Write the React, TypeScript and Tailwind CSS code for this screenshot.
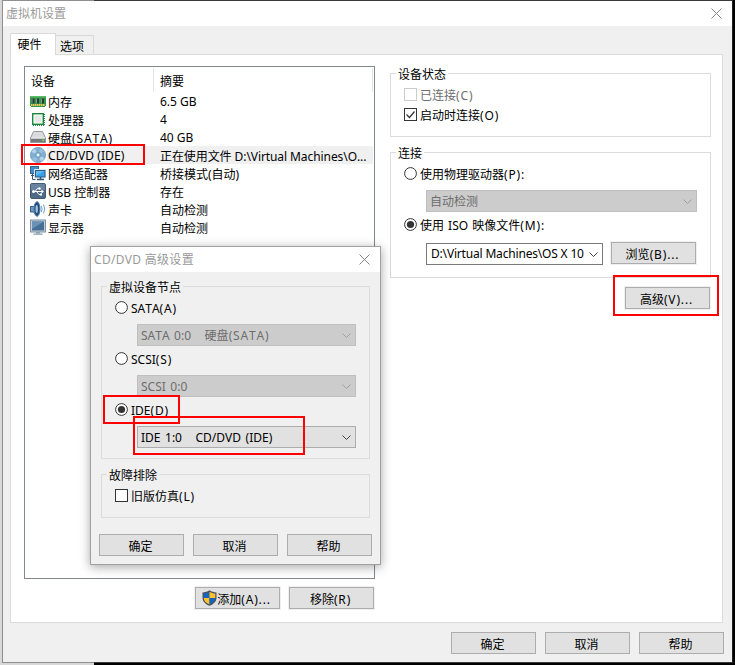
import React from "react";

// --- DATA CONFIGURATION ---
const DEVICES = [
  { icon: "memory", name: "内存", summary: "6.5 GB" },
  { icon: "cpu", name: "处理器", summary: "4" },
  { icon: "disk", name: "硬盘(SATA)", summary: "40 GB" },
  {
    icon: "cd",
    name: "CD/DVD (IDE)",
    summary: "正在使用文件 D:\\Virtual Machines\\O...",
    selected: true,
  },
  { icon: "network", name: "网络适配器", summary: "桥接模式(自动)" },
  { icon: "usb", name: "USB 控制器", summary: "存在" },
  { icon: "sound", name: "声卡", summary: "自动检测" },
  { icon: "display", name: "显示器", summary: "自动检测" },
];

const DeviceIcon = ({ icon }: { icon: string }) => {
  const props = { width: 16, height: 16, viewBox: "0 0 16 16", className: "shrink-0" };
  switch (icon) {
    case "memory":
      return (
        <svg {...props}>
          <path d="M0 3h16v10h-1v1H1v-1H0z" fill="#2f9a45" />
          <path d="M0 3h16v1.500H0z" fill="#5cbb66" />
          <path d="M1.500 5.500h3v5h-3zM6 5.500h3v5H6zM11 5.500h3v5h-3z" fill="#2b3b38" />
          <path d="M1.500 5.500h1v5h-1zM6 5.500h1v5H6zM11 5.500h1v5h-1z" fill="#82968c" />
          <path d="M1 12h14" stroke="#efc75c" strokeWidth="2" strokeDasharray="1.500 .5" />
        </svg>
      );
    case "cpu":
      return (
        <svg {...props}>
          <rect x="2.500" y="2.500" width="11" height="11" fill="#3da556" stroke="#1f8240" />
          <path d="M2.500 3v11M14.500 3v11M3 14.500h11" stroke="#2a8c48" strokeDasharray="1 1" />
          <rect x="4" y="4" width="8" height="8" fill="#e6e8e7" stroke="#f7fbf8" />
        </svg>
      );
    case "disk":
      return (
        <svg {...props}>
          <path d="M3.500 2.500h9L15.500 9v4.500H.5V9z" fill="#c9ced3" stroke="#969a9e" />
          <path d="M4 3h8l2.500 6h-13z" fill="#d9dbdd" />
          <path d="M1 9.500h14V13H1z" fill="#74797e" />
          <path d="M1 9h14" stroke="#f1f2f3" />
          <rect x="12" y="10.500" width="2" height="1.500" fill="#67e047" />
        </svg>
      );
    case "cd":
      return (
        <svg {...props}>
          <circle cx="8" cy="8" r="7.600" fill="#84aed0" stroke="#6c99bf" strokeWidth=".8" />
          <path d="M8 8 1.500 5A7 7 0 0 1 5 1.700zM8 8l6.500 3a7 7 0 0 1-3.500 3.300z" fill="#b7d3e8" />
          <path d="M8 8 10 1.300a7 7 0 0 1 4 3.200zM8 8l-2 6.700a7 7 0 0 1-4-3.200z" fill="#98bfdc" />
          <circle cx="8" cy="8" r="2.800" fill="#8fb9da" stroke="#6e9fc8" />
          <circle cx="8" cy="8" r="1.200" fill="#f4f9fc" />
        </svg>
      );
    case "network":
      return (
        <svg {...props}>
          <rect x=".5" y="1.500" width="8" height="7" fill="#3f8cc9" stroke="#3c648b" />
          <path d="M1 10.500h4M2.500 9v5.500h3" stroke="#3c5873" fill="none" />
          <rect x="4.500" y="4.500" width="11" height="8.500" fill="#fff" stroke="#e0e8ee" />
          <rect x="5.500" y="5.500" width="9.500" height="6.500" fill="#38a0ea" stroke="#2c5b88" />
          <path d="M6 6h8.500L6 10.500z" fill="#64bbf4" />
          <path d="M7 14.500h7M10.500 12v2" stroke="#345675" strokeWidth="1.500" />
        </svg>
      );
    case "usb":
      return (
        <svg {...props}>
          <rect x=".5" y=".5" width="15" height="15" rx="1.500" fill="#4f6a84" stroke="#435c74" />
          <path d="M1 1h14v6H1z" fill="#6882a0" />
          <path d="M3 8.500h9M5 8.500l2.500-3h2M6.500 8.500 9 11.500h2" stroke="#fff" fill="none" />
          <circle cx="3.500" cy="8.500" r="1.500" fill="#fff" />
          <circle cx="9.500" cy="5.500" r="1.200" fill="#fff" />
          <path d="M11.500 6.500 14 8.500l-2.500 2zM10 10.500h2v2h-2z" fill="#fff" />
        </svg>
      );
    case "sound":
      return (
        <svg {...props}>
          <path d="M.5 5.500h3L7.500.8v14.400L3.500 11h-3z" fill="#6d99c0" stroke="#335b86" />
          <ellipse cx="7" cy="8" rx="3" ry="7.200" fill="#254a75" stroke="#4d7fad" />
          <ellipse cx="6.700" cy="8" rx="1.200" ry="4" fill="#9fc6e4" />
          <path d="M11.300 5q1.700 3 0 6M13.500 3.500q2.500 4.500 0 9" stroke="#6aa0cd" fill="none" />
        </svg>
      );
    default:
      return (
        <svg {...props}>
          <rect x=".5" y="1" width="15" height="12" fill="#c3ced7" stroke="#7d93a6" />
          <rect x="2" y="2.500" width="12" height="9" fill="#466f96" />
          <path d="M2 2.500h12L2 10z" fill="#6b92b5" />
          <path d="M6 13h4v1.500H6z" fill="#8c9dac" />
          <path d="M3.500 15.200h9" stroke="#9aabb9" strokeWidth="1.500" />
        </svg>
      );
  }
};

const ShieldIcon = () => (
  <svg width="15" height="16" viewBox="0 0 15 16" className="shrink-0">
    <path d="M7.500.2C5.500 1.600 3 2.300.5 2.400v5.300c0 3.800 2.900 6.400 7 8.100 4.100-1.700 7-4.300 7-8.100V2.400C12 2.300 9.500 1.600 7.500.2z" fill="#4a5058" />
    <path d="M7.500 1.700C5.500 2.900 3.700 3.400 1.700 3.600v4.300h5.800z" fill="#1565c0" />
    <path d="M7.500 1.700c2 1.200 3.800 1.700 5.800 1.900v4.300H7.500z" fill="#ffc12e" />
    <path d="M1.700 7.900h5.800v6.500c-3.200-1.400-5.500-3.400-5.800-6.500z" fill="#ffc12e" />
    <path d="M13.300 7.900H7.500v6.500c3.200-1.400 5.500-3.400 5.800-6.500z" fill="#1565c0" />
  </svg>
);

const CloseIcon = () => (
  <svg width="11" height="11" viewBox="0 0 11 11" className="shrink-0">
    <path d="M.5.5l10 10M10.500.5l-10 10" stroke="#858585" fill="none" />
  </svg>
);

// Access keys such as "(A)..." are set a little wider than the label before them
const Label = ({ text, className = "" }: { text: string; className?: string }) => {
  const match = text.match(/^(.*\S)(\([A-Z]+\)\S*)$/);
  return (
    <span className={`whitespace-pre ${className}`}>
      {match ? match[1] : text}
      {match && <span className="tracking-[0.85px]">{match[2]}</span>}
    </span>
  );
};

// Latin-only cells sit one pixel above the Chinese ones
const cellPadding = (text: string) => (/^[ -~]+$/.test(text) ? "pt-px" : "pt-[3px]");

const Button = ({ label, icon }: { label: string; icon?: React.ReactNode }) => (
  <button className="flex h-[22px] w-[85px] shrink-0 items-center justify-center border border-[#adadad] bg-[#e1e1e1] pr-0.5 whitespace-nowrap ring-1 ring-[#f0f0f0]">
    {icon}
    <Label text={label} className="pt-[3px]" />
  </button>
);

const Radio = ({ label, checked }: { label: string; checked?: boolean }) => (
  <div className="flex h-[14px] items-center gap-[3px]">
    <svg width="13" height="13" viewBox="0 0 13 13" className="mb-px shrink-0">
      <circle cx="6.500" cy="6.500" r="5.900" fill="#fff" stroke="#333" />
      {checked && <circle cx="6.500" cy="6.500" r="3.600" fill="#333" />}
    </svg>
    <Label text={label} className="pt-0.5 [word-spacing:1px]" />
  </div>
);

const Checkbox = ({
  label,
  checked,
  disabled,
}: {
  label: string;
  checked?: boolean;
  disabled?: boolean;
}) => (
  <div className="flex h-[13px] items-center gap-[3px]">
    <svg width="13" height="13" viewBox="0 0 13 13" className="shrink-0">
      <rect x=".5" y=".5" width="12" height="12" fill="#fff" stroke={disabled ? "#ccc" : "#333"} />
      {checked && <path d="M2.500 6.500l3 3 5-6" stroke="#333" strokeWidth="1.200" fill="none" />}
    </svg>
    <Label text={label} className={disabled ? "pt-[3px] text-[#6d6d6d]" : "pt-[3px]"} />
  </div>
);

const Select = ({ value, look }: { value: string; look: "disabled" | "edit" | "list" }) => {
  const colors = {
    disabled: "border-[#bfbfbf] bg-[#cccccc] text-[#6d6d6d]",
    edit: "border-[#7a7a7a] bg-white text-black",
    list: "border-[#adadad] bg-[#e1e1e1] text-black",
  };
  return (
    <div className={`flex h-[22px] items-center justify-between border pr-1 pl-[3px] ${colors[look]}`}>
      <Label
        text={value}
        className={look === "edit" ? "pl-px tracking-[-0.18px]" : "pt-0.5 [word-spacing:1.4px]"}
      />
      <svg width="9" height="5" viewBox="0 0 9 5" className="shrink-0">
        <path d="M.5.5l4 4 4-4" stroke={look === "disabled" ? "#a0a0a0" : "#444"} fill="none" />
      </svg>
    </div>
  );
};

const Marker = ({ className }: { className: string }) => (
  <div className={`pointer-events-none absolute border-2 border-[#f00] ${className}`} />
);

const AdvancedDialog = () => (
  <div className="absolute top-[246px] left-[90px] h-[319px] w-[291px] border border-[#a0a0a0] bg-[#f0f0f0] shadow-[0_2px_10px_rgba(0,0,0,0.35)]">
    <div className="flex h-[25px] items-center justify-between bg-white pr-2.5 pl-[3px] text-[#999]">
      <span className="tracking-[0.3px]">CD/DVD 高级设置</span>
      <CloseIcon />
    </div>
    <div className="mx-2.5 mt-[14px] h-[173px] border border-[#dcdcdc] px-[13px]">
      <div className="-mt-2 -ml-2 h-4 w-fit bg-[#f0f0f0] px-0.5 leading-[18px]">虚拟设备节点</div>
      <div className="mt-1.5">
        <Radio label="SATA(A)" />
      </div>
      <div className="mt-[9px] ml-[22px]">
        <Select value="SATA 0:0   硬盘(SATA)" look="disabled" />
      </div>
      <div className="mt-1.5">
        <Radio label="SCSI(S)" />
      </div>
      <div className="mt-[9px] ml-[22px]">
        <Select value="SCSI 0:0" look="disabled" />
      </div>
      <div className="mt-1.5">
        <Radio label="IDE(D)" checked />
      </div>
      <div className="mt-[9px] ml-[22px]">
        <Select value="IDE 1:0   CD/DVD (IDE)" look="list" />
      </div>
    </div>
    <div className="mx-2.5 mt-[15px] h-11 border border-[#dcdcdc] px-[13px]">
      <div className="-mt-2 -ml-2 h-4 w-fit bg-[#f0f0f0] px-0.5 leading-[18px]">故障排除</div>
      <div className="mt-1.5">
        <Checkbox label="旧版仿真(L)" />
      </div>
    </div>
    <div className="mt-4 flex gap-[9px] pl-2">
      <Button label="确定" />
      <Button label="取消" />
      <Button label="帮助" />
    </div>
  </div>
);

const HardwareList = () => (
  <div className="h-[513px] border border-[#828790] bg-white">
    <div className="flex h-[25px] pt-px">
      <div className="w-[129px] border-r border-[#e5e5e5] pt-0.5 pl-1.5 leading-[24px]">设备</div>
      <div className="mr-px flex-1 border-r border-[#e5e5e5] pt-0.5 pl-1.5 leading-[24px]">摘要</div>
    </div>
    {DEVICES.map((device) => (
      <div
        key={device.name}
        className="flex h-[18px] items-center pl-[5px] leading-[18px] whitespace-nowrap"
      >
        <DeviceIcon icon={device.icon} />
        <div
          className={`ml-px flex h-[18px] w-[107px] items-center pl-px ${device.selected ? "bg-[#f0f0f0] tracking-[0.08px]" : ""}`}
        >
          <Label text={device.name} className={cellPadding(device.name)} />
        </div>
        <div
          className={`mr-px flex h-[18px] flex-1 items-center pl-1.5 ${device.selected ? "bg-[#f0f0f0] tracking-[-0.08px]" : ""}`}
        >
          <Label text={device.summary} className={cellPadding(device.summary)} />
        </div>
      </div>
    ))}
  </div>
);

const ConnectionSettings = () => (
  <div className="w-[321px]">
    <div className="mt-[7px] h-16 border border-[#dcdcdc] px-[13px]">
      <div className="-mt-2 -ml-2 h-4 w-fit bg-white px-0.5 leading-[18px]">设备状态</div>
      <div className="mt-1.5">
        <Checkbox label="已连接(C)" disabled />
      </div>
      <div className="mt-[7px]">
        <Checkbox label="启动时连接(O)" checked />
      </div>
    </div>
    <div className="mt-[15px] h-[126px] border border-[#dcdcdc] px-[13px]">
      <div className="-mt-2 -ml-2 h-4 w-fit bg-white px-0.5 leading-[18px]">连接</div>
      <div className="mt-1.5">
        <Radio label="使用物理驱动器(P):" />
      </div>
      <div className="mt-[9px] ml-[22px]">
        <Select value="自动检测" look="disabled" />
      </div>
      <div className="mt-1.5">
        <Radio label="使用 ISO 映像文件(M):" checked />
      </div>
      <div className="mt-[10px] ml-[22px] flex gap-2">
        <div className="mt-px w-[177px]">
          <Select value="D:\Virtual Machines\OS X 10" look="edit" />
        </div>
        <Button label="浏览(B)..." />
      </div>
    </div>
    <div className="mt-[9px] flex justify-end pr-px">
      <Button label="高级(V)..." />
    </div>
  </div>
);

export default function App() {
  return (
    <div className="relative h-[665px] w-[735px] overflow-hidden bg-[linear-gradient(to_right,#d8d8d8_94px,#000_94px)] pl-0.5 font-['Noto_Sans','Noto_Sans_CJK_SC',sans-serif] text-[12px] leading-4 text-black [font-kerning:none]">
      <div className="h-[663px] w-[731px] border border-[#606060]/60 border-r-[#222] bg-[#f0f0f0] bg-clip-padding">
        <div className="flex h-[25px] items-center justify-between bg-white pr-2.5 pl-[3px] text-[#999]">
          <span>虚拟机设置</span>
          <CloseIcon />
        </div>

        {/* Tabs */}
        <div className="mt-[7px] ml-[7px] flex h-[21px] items-end">
          <div className="relative -mb-px flex h-[22px] w-[46px] items-center justify-center border border-b-0 border-[#d9d9d9] bg-white pr-[7px] pt-px">
            硬件
          </div>
          <div className="-ml-px flex h-[19px] w-[39px] items-center justify-center border border-b-0 border-[#d9d9d9] pt-[3px] pr-[5px]">
            选项
          </div>
        </div>

        {/* Hardware tab */}
        <div className="ml-[7px] flex h-[569px] w-[713px] gap-[15px] border border-[#dcdcdc] bg-white pt-[11px] pl-[13px]">
          <div className="w-[351px]">
            <HardwareList />
            <div className="mt-2 flex justify-end gap-[9px] pr-px">
              <Button icon={<ShieldIcon />} label="添加(A)..." />
              <Button label="移除(R)" />
            </div>
          </div>
          <ConnectionSettings />
        </div>

        <div className="mt-[9px] flex justify-end gap-[9px] pr-2">
          <Button label="确定" />
          <Button label="取消" />
          <Button label="帮助" />
        </div>
      </div>

      <AdvancedDialog />

      {/* Highlight markers */}
      <Marker className="top-[144px] left-[21px] h-[21px] w-[124px]" />
      <Marker className="top-[275px] left-[613px] h-[41px] w-[106px]" />
      <Marker className="top-[395px] left-[103px] h-[29px] w-[77px]" />
      <Marker className="top-[416px] left-[133px] h-[39px] w-[172px]" />
    </div>
  );
}
